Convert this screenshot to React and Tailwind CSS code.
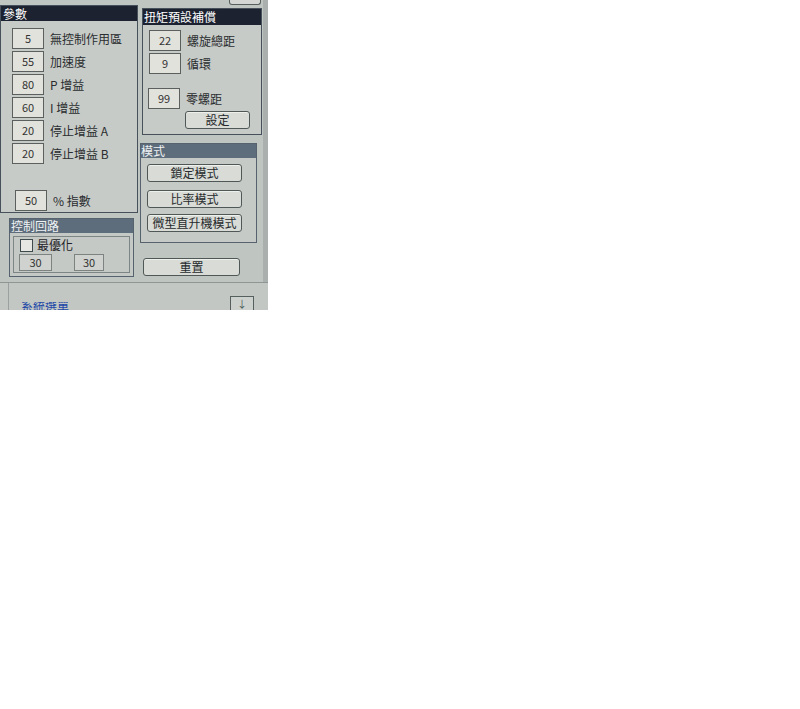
import React from "react";

const font = { fontFamily: '"Noto Sans CJK TC", "Noto Sans", sans-serif' };

function Field({ value, className = "" }) {
  return (
    <div
      className={`w-[32px] h-[21px] shrink-0 border border-[#5b605f] bg-[#e2e2dc] text-[11px] leading-[19px] text-center text-[#333] ${className}`}
    >
      {value}
    </div>
  );
}

function Row({ value, label, className = "" }) {
  return (
    <div className={`flex items-center ${className}`}>
      <Field value={value} />
      <span className="ml-[6px] text-[12px] text-[#2a2d2f] whitespace-nowrap">{label}</span>
    </div>
  );
}

function Btn({ children, className = "" }) {
  return (
    <div
      className={`h-[18px] rounded-[3px] border border-[#4f5857] bg-[#d8dbd6] text-[12px] leading-[16px] text-center text-[#262a2c] shadow-[inset_0_1px_0_#eef0ec] ${className}`}
    >
      {children}
    </div>
  );
}

export default function App() {
  return (
    <div className="w-[800px] h-[709px] bg-white" style={font}>
      <div className="w-[268px] h-[310px] bg-[#bfc5c1] overflow-hidden flex flex-col">
        <div className="flex h-[283px] border-b border-[#8f9794]">
          {/* left column */}
          <div className="w-[138px] flex flex-col">
            <div className="mt-[5px] h-[208px] border border-[#46515c] bg-[#c7cbc8] flex flex-col">
              <div className="h-[15px] bg-[#1c2230] text-white text-[12px] leading-[15px] px-[2px]">參數</div>
              <div className="pl-[11px] pt-[7px] flex flex-col gap-[2px]">
                <Row value="5" label="無控制作用區" />
                <Row value="55" label="加速度" />
                <Row value="80" label="P 增益" />
                <Row value="60" label="I 增益" />
                <Row value="20" label="停止增益 A" />
                <Row value="20" label="停止增益 B" />
                <div className="flex items-center mt-[24px] ml-[3px]">
                  <Field value="50" />
                  <span className="ml-[6px] text-[12px] text-[#2a2d2f]">% 指數</span>
                </div>
              </div>
            </div>
            <div className="mt-[5px] ml-[9px] w-[125px] h-[59px] border border-[#56626d] bg-[#c4c9c6] flex flex-col">
              <div className="h-[14px] bg-[#5e6d7b] text-[#eef2f4] text-[12px] leading-[14px] px-[1px]">控制回路</div>
              <div className="mx-[3px] mt-[3px] h-[37px] border border-[#7d8684] px-[6px]">
                <div className="flex items-center mt-[1px]">
                  <div className="w-[13px] h-[13px] border border-[#3f4a4c] bg-[#e6e7e2]" />
                  <span className="ml-[4px] text-[12px] leading-[14px] text-[#1f2326]">最優化</span>
                </div>
                <div className="flex mt-[2px] gap-[22px] -ml-[1px]">
                  <div className="w-[33px] h-[17px] border border-[#7c8381] bg-[#cfd2ce] text-[11px] leading-[15px] text-center text-[#333]">30</div>
                  <div className="w-[30px] h-[17px] border border-[#7c8381] bg-[#cfd2ce] text-[11px] leading-[15px] text-center text-[#333]">30</div>
                </div>
              </div>
            </div>
          </div>

          {/* right column */}
          <div className="flex-1 flex flex-col pl-[4px] border-r-[5px] border-[#a9b0ad]">
            <div className="h-[8px] flex justify-end">
              <div className="w-[32px] h-[5px] mr-[2px] border border-t-0 border-[#55605e] rounded-b-[3px] bg-[#d3d6d2]" />
            </div>
            <div className="w-[120px] h-[127px] border border-[#46515c] bg-[#c7cbc8] flex flex-col">
              <div className="h-[16px] bg-[#1c2230] text-white text-[12px] leading-[16px] px-[1px]">扭矩預設補償</div>
              <div className="pl-[6px] pt-[5px] flex flex-col gap-[2px]">
                <Row value="22" label="螺旋總距" />
                <Row value="9" label="循環" />
                <Row value="99" label="零螺距" className="mt-[12px] -ml-[1px]" />
              </div>
              <Btn className="mt-[2px] ml-[42px] w-[65px]">設定</Btn>
            </div>
            <div className="mt-[8px] -ml-[2px] w-[117px] h-[100px] border border-[#56626d] bg-[#c5cac7] flex flex-col">
              <div className="h-[14px] bg-[#5e6d7b] text-[#eef2f4] text-[12px] leading-[14px]">模式</div>
              <div className="pl-[6px] pt-[6px] flex flex-col">
                <Btn className="w-[95px]">鎖定模式</Btn>
                <Btn className="w-[95px] mt-[8px]">比率模式</Btn>
                <Btn className="w-[95px] mt-[6px]">微型直升機模式</Btn>
              </div>
            </div>
            <Btn className="mt-[15px] ml-[1px] w-[97px]">重置</Btn>
          </div>
        </div>
        <div className="flex-1 flex items-end justify-between pl-[8px] pr-[14px] bg-[#c2c7c3]">
          <div className="border-l border-[#9aa19e] h-full flex items-end pl-[12px]">
            <span className="text-[12px] leading-[8px] h-[8px] overflow-hidden text-[#2349a8]">系統選單</span>
          </div>
          <div className="w-[24px] h-[14px] border border-b-0 border-[#55605e] bg-[#cdd1cd] text-[10px] leading-[14px] text-center text-[#4a5a58]">↓</div>
        </div>
      </div>
    </div>
  );
}
